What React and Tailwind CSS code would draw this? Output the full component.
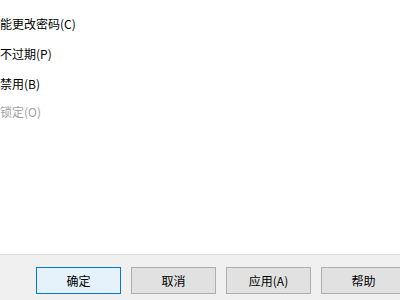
import React from 'react';

const options = [
  { label: '用户不能更改密码(C)', disabled: false },
  { label: '密码永不过期(P)', disabled: false },
  { label: '帐户已禁用(B)', disabled: false },
  { label: '帐户已锁定(O)', disabled: true },
];

const buttons = [
  { label: '确定', primary: true },
  { label: '取消' },
  { label: '应用(A)' },
  { label: '帮助' },
];

const App = () => {
  return (
    <div
      className="w-[400px] h-[300px] overflow-hidden flex flex-col bg-white text-[12px] text-black"
      style={{ fontFamily: '"Noto Sans CJK SC", "Liberation Sans", sans-serif' }}
    >
      {/* Checkbox labels, clipped at the left edge */}
      <div className="flex-1 overflow-hidden">
        <div className="ml-[-36px] pt-[16px] flex flex-col">
          {options.map((opt, i) => (
            <div
              key={opt.label}
              className={`h-[16px] leading-[16px] whitespace-nowrap ${
                i === 0 ? '' : i === 3 ? 'mt-[12px]' : 'mt-[14px]'
              } ${opt.disabled ? 'text-[#a0a0a0]' : 'text-black'}`}
            >
              {opt.label}
            </div>
          ))}
        </div>
      </div>

      {/* Bottom button bar */}
      <div className="h-[46px] border-t border-[#dfdfdf] bg-[#f0f0f0] flex items-start pt-[12px] pl-[36px] gap-[10px] shrink-0">
        {buttons.map((btn) => (
          <button
            key={btn.label}
            className={`w-[85px] h-[27px] shrink-0 flex items-center justify-center text-[12px] text-black border ${
              btn.primary
                ? 'bg-[#e5f1fb] border-[#0078d7]'
                : 'bg-[#e1e1e1] border-[#adadad]'
            }`}
          >
            {btn.label}
          </button>
        ))}
      </div>
    </div>
  );
};

export default App;
